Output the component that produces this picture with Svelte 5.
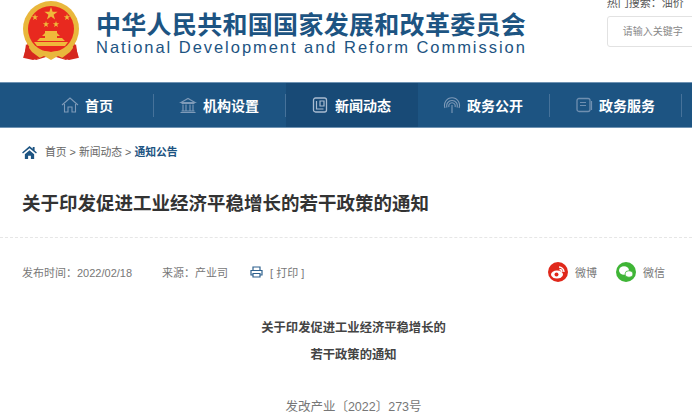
<script>
  const navItems = [
    { label: '首页', icon: 'home' },
    { label: '机构设置', icon: 'bank' },
    { label: '新闻动态', icon: 'news', active: true },
    { label: '政务公开', icon: 'signal' },
    { label: '政务服务', icon: 'book' }
  ];
</script>

<div class="page">
  <header class="header">
    <svg class="emblem" viewBox="0 0 58 62" width="58" height="62" aria-hidden="true">
      <path d="M6 42 L1 58 L9 56 L14 60 L24 57 L34 57 L44 60 L49 56 L57 58 L52 42Z" fill="#d6281f" />
      <circle cx="29" cy="29" r="28" fill="#e9b73c" />
      <circle cx="29" cy="29" r="23" fill="#e8291f" />
      <path d="M29 7l1.600 4.800h5l-4 3 1.500 4.800-4.100-3-4.100 3 1.500-4.800-4-3h5z" fill="#f0b93a" />
      <path d="M13 14l.8 2.300h2.400l-2 1.500.8 2.300-2-1.400-2 1.400.8-2.300-2-1.500h2.400zM45 14l.8 2.300h2.400l-2 1.500.8 2.300-2-1.400-2 1.400.8-2.300-2-1.500h2.400zM24 21l.8 2.300h2.400l-2 1.500.8 2.300-2-1.400-2 1.400.8-2.300-2-1.500h2.400zM34 21l.8 2.300h2.400l-2 1.500.8 2.300-2-1.400-2 1.400.8-2.300-2-1.500h2.400z" fill="#f0b93a" />
      <path d="M23 31h12v2l3 3h-3v2h5l3 3H15l3-3h5v-2h-3l3-3z" fill="#f0b93a" />
      <path d="M12 42h34l-3 4H15z" fill="#f0b93a" />
      <path d="M8 44c3 5 10 8 15 7l6 1 6-1c5 1 12-2 15-7l2 7-9 8-7-3-7 4-7-4-7 3-9-8z" fill="#e9b73c" />
      <path d="M4 44l6 8 8 6-7 2-9-2zM54 44l-6 8-8 6 7 2 9-2z" fill="#d6281f" />
    </svg>
    <div class="brand">
      <div class="brand-cn">中华人民共和国国家发展和改革委员会</div>
      <div class="brand-en">National Development and Reform Commission</div>
    </div>
    <div class="search">
      <div class="hot">热门搜索：油价</div>
      <div class="search-box">请输入关键字</div>
    </div>
  </header>

  <nav class="nav">
    {#each navItems as item}
      <div class="nav-item" class:active={item.active}>
        <svg class="nav-icon" viewBox="0 0 18 18" width="18" height="18" fill="none" stroke="#7e9ab8" stroke-width="1.1" aria-hidden="true">
          {#if item.icon === 'home'}
            <path d="M1 9 9 2l8 7M3.500 8v8h3.500v-5h4v5h3.500V8" />
          {:else if item.icon === 'bank'}
            <path d="M2 6.500 9 2.500l7 4zM2.500 7.500h13M4 8.500v6M7 8.500v6M11 8.500v6M14 8.500v6M2.500 15h13M1.500 16.500h15" />
          {:else if item.icon === 'news'}
            <rect x="2.500" y="2" width="13" height="14" rx="2" stroke="#a9bcd1" stroke-width="1.300" />
            <path d="M9 5h4v5H9zM5.500 5v8h7" stroke="#a9bcd1" stroke-width="1.200" />
          {:else if item.icon === 'signal'}
            <path d="M2 12a7.500 7.500 0 1 1 14 0M4 11.500a5.300 5.300 0 1 1 10 0M6 11a3.200 3.200 0 1 1 6 0M9 9v8" />
          {:else}
            <rect x="2" y="2.500" width="13" height="13" rx="2" stroke="#6f8fb0" stroke-width="1.300" />
            <path d="M5 6.500h6M5 9.500h6M16.500 5v9" stroke="#6f8fb0" stroke-width="1.200" />
          {/if}
        </svg>
        <span>{item.label}</span>
      </div>
    {/each}
  </nav>

  <div class="crumbs">
    <svg viewBox="0 0 16 14" width="15" height="13" fill="#1d5482" aria-hidden="true">
      <path d="M8 0 0 7l1 1.200L8 2.300l7 5.900L16 7l-2.500-2.200V1h-2v2zM3 9v5h3.500v-3.500h3V14H13V9L8 4.500z" />
    </svg>
    <span class="crumb-links">首页 &gt; 新闻动态 &gt; <b>通知公告</b></span>
  </div>

  <h1 class="title">关于印发促进工业经济平稳增长的若干政策的通知</h1>

  <div class="meta">
    <span class="date">发布时间：2022/02/18</span>
    <span class="source">来源：产业司</span>
    <svg class="printer" viewBox="0 0 13 12" width="13" height="12" fill="none" stroke="#2e618e" stroke-width="1.200" aria-hidden="true">
      <path d="M3 4V1h7v3M3 9H1V4.500h11V9h-2M3 7.500h7V11H3z" />
    </svg>
    <span class="print">[ 打印 ]</span>
    <div class="share">
      <span class="round weibo">
        <svg viewBox="0 0 20 20" width="20" height="20" aria-hidden="true">
          <ellipse cx="9" cy="12.500" rx="6" ry="4" fill="#fff" />
          <circle cx="8.500" cy="12.500" r="2" fill="#e0281b" />
          <path d="M11 5a5 5 0 0 1 5 5M11.500 7.500a2.500 2.500 0 0 1 2.500 2.500" stroke="#fff" stroke-width="1.300" fill="none" />
        </svg>
      </span>
      <span class="share-label">微博</span>
      <span class="round wechat">
        <svg viewBox="0 0 20 20" width="20" height="20" fill="#fff" aria-hidden="true">
          <ellipse cx="8" cy="8.500" rx="5" ry="4.200" />
          <ellipse cx="13" cy="12" rx="4" ry="3.300" stroke="#3fb536" stroke-width="0.800" />
        </svg>
      </span>
      <span class="share-label">微信</span>
    </div>
  </div>

  <div class="body">
    <p class="b">关于印发促进工业经济平稳增长的</p>
    <p class="b">若干政策的通知</p>
    <p class="doc-no">发改产业〔2022〕273号</p>
  </div>
</div>

<style>
  :global(body) {
    margin: 0;
    background: #fff;
  }
  .page {
    height: 415px;
    overflow: hidden;
    font-family: "Liberation Sans", "Noto Sans CJK SC", sans-serif;
    color: #666;
  }
  .header {
    height: 82px;
    display: flex;
    align-items: flex-start;
    padding-left: 22px;
    overflow: hidden;
  }
  .emblem {
    flex: none;
  }
  .brand {
    margin-left: 16px;
    padding-top: 11px;
    color: #1d5482;
    width: 432px;
  }
  .brand-cn {
    font-size: 25px;
    line-height: 28px;
    font-weight: 700;
    letter-spacing: 0.3px;
    white-space: nowrap;
  }
  .brand-en {
    font-size: 16.5px;
    line-height: 16px;
    letter-spacing: 1.96px;
    white-space: nowrap;
  }
  .search {
    margin-left: 80px;
    margin-top: -5px;
    flex: none;
    width: 200px;
  }
  .hot {
    font-size: 11px;
    line-height: 16px;
    color: #555;
  }
  .search-box {
    margin-top: 5px;
    height: 29px;
    line-height: 29px;
    border: 1px solid #e2e2e2;
    border-radius: 3px;
    padding-left: 15px;
    font-size: 10px;
    color: #888;
  }
  .nav {
    height: 46px;
    background: #1d5482;
    border-top: 1px solid #6f93b3;
    border-bottom: 1px solid #6f93b3;
    box-sizing: border-box;
    display: flex;
    padding-left: 22px;
    color: #fff;
  }
  .nav-item {
    width: 132px;
    flex: none;
    box-sizing: border-box;
    padding-right: 2px;
    display: flex;
    align-items: center;
    justify-content: center;
    gap: 6px;
    font-size: 14px;
    font-weight: 700;
    position: relative;
  }
  .nav-item::after {
    content: "";
    position: absolute;
    right: 0;
    top: 11px;
    height: 23px;
    width: 1px;
    background: #46729a;
  }
  .nav-item.active {
    background: #184a76;
  }
  .nav-item.active::after {
    display: none;
  }
  .crumbs {
    display: flex;
    align-items: center;
    gap: 8px;
    padding: 17px 0 0 22px;
    height: 14px;
  }
  .crumb-links {
    font-size: 10.800px;
    line-height: 14px;
    color: #666;
  }
  .crumb-links b {
    color: #1d5482;
  }
  .title {
    margin: 0;
    padding: 33px 22px 0;
    height: 45px;
    border-bottom: 1px dashed #e6e6e6;
    font-size: 18.500px;
    line-height: 24px;
    font-weight: 700;
    color: #333;
  }
  .meta {
    display: flex;
    align-items: center;
    padding: 23px 27px 0 22px;
    height: 22px;
    font-size: 11px;
    color: #777;
  }
  .source {
    margin-left: 30px;
  }
  .printer {
    margin-left: 22px;
  }
  .print {
    margin-left: 7px;
  }
  .share {
    margin-left: auto;
    display: flex;
    align-items: center;
  }
  .round {
    width: 20px;
    height: 20px;
    border-radius: 50%;
    display: block;
  }
  .round svg {
    display: block;
  }
  .weibo {
    background: #e0281b;
  }
  .wechat {
    background: #3fb536;
    margin-left: 19px;
  }
  .share-label {
    margin-left: 7px;
  }
  .body {
    padding: 32px 0 0 15px;
    text-align: center;
    font-size: 12.500px;
    color: #555;
  }
  .body p {
    margin: 0;
    line-height: 26.500px;
  }
  .body .b {
    font-size: 12.300px;
    font-weight: 700;
    color: #444;
  }
  .body .doc-no {
    margin-top: 26px;
    color: #777;
  }
</style>
